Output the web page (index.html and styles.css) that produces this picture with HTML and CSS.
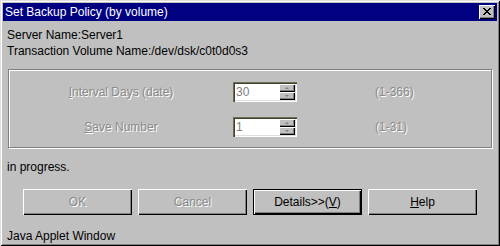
FILE: index.html
```html
<!DOCTYPE html>
<html>
<head>
<meta charset="utf-8">
<link rel="stylesheet" href="styles.css">
</head>
<body>
<div class="window">
  <div class="titlebar">
    <span class="title">Set Backup Policy (by volume)</span>
    <div class="close">
      <svg width="8" height="7" viewBox="0 0 8 7"><path d="M0 0h2v1h1v1h2v-1h1v-1h2v1h-1v1h-1v1h-1v1h1v1h1v1h1v1h-2v-1h-1v-1h-2v1h-1v1h-2v-1h1v-1h1v-1h1v-1h-1v-1h-1v-1h-1z" fill="#000"/></svg>
    </div>
  </div>
  <div class="body">
    <div class="info">Server Name:Server1</div>
    <div class="info">Transaction Volume Name:/dev/dsk/c0t0d0s3</div>
    <div class="group">
      <div class="row">
        <div class="label disabled"><u>I</u>nterval Days (date)</div>
        <div class="spin">
          <div class="field">30</div>
          <div class="spinbtns">
            <div class="sbtn"><span class="tri up"></span></div>
            <div class="sbtn"><span class="tri down"></span></div>
          </div>
        </div>
        <div class="range disabled">(1-366)</div>
      </div>
      <div class="row">
        <div class="label disabled"><u>S</u>ave Number</div>
        <div class="spin">
          <div class="field">1</div>
          <div class="spinbtns">
            <div class="sbtn"><span class="tri up"></span></div>
            <div class="sbtn"><span class="tri down"></span></div>
          </div>
        </div>
        <div class="range disabled">(1-31)</div>
      </div>
    </div>
    <div class="status">in progress.</div>
    <div class="buttons">
      <div class="btn"><span class="disabled">OK</span></div>
      <div class="btn"><span class="disabled">Cancel</span></div>
      <div class="btn default"><span>Details&gt;&gt;(<u>V</u>)</span></div>
      <div class="btn"><span><u>H</u>elp</span></div>
    </div>
    <div class="footer">Java Applet Window</div>
  </div>
</div>
</body>
</html>
```

FILE: styles.css
```css
html, body {
  margin: 0;
  padding: 0;
  background: #c0c0c0;
}
body {
  font-family: "Liberation Sans", Arial, sans-serif;
  font-size: 12px;
  color: #000;
}
.window {
  width: 500px;
  height: 246px;
  box-sizing: border-box;
  padding: 3px;
  background: #c0c0c0;
  box-shadow: inset 1px 1px #dfdfdf, inset -1px -1px #000, inset 2px 2px #fff, inset -2px -2px #808080;
  display: flex;
  flex-direction: column;
}
.titlebar {
  height: 18px;
  background: #000080;
  display: flex;
  align-items: center;
  justify-content: space-between;
  flex: none;
}
.title {
  color: #fff;
  padding-left: 2px;
  line-height: 18px;
}
.close {
  width: 16px;
  height: 14px;
  box-sizing: border-box;
  margin-right: 2px;
  background: #c0c0c0;
  box-shadow: inset 1px 1px #fff, inset -1px -1px #000, inset -2px -2px #808080;
  display: flex;
  align-items: center;
  justify-content: center;
  padding: 0 1px 1px 0;
}
.close svg { display: block; }
.body {
  display: flex;
  flex-direction: column;
  padding-top: 6px;
}
.info {
  line-height: 16px;
  padding-left: 4px;
}
.group {
  margin: 10px 5px 0 5px;
  height: 79px;
  box-sizing: border-box;
  border: 1px solid #808080;
  box-shadow: inset 1px 1px #fff, 1px 1px #fff;
  padding: 12px 0 10px 0;
  display: flex;
  flex-direction: column;
  gap: 15px;
}
.row {
  display: grid;
  grid-template-columns: 224px 64px 1fr;
  align-items: center;
  height: 20px;
}
.label {
  text-align: center;
  line-height: 16px;
}
.disabled {
  color: #8a8a8a;
  text-shadow: 1px 1px 0 #fff;
}
.spin {
  height: 20px;
  box-sizing: border-box;
  padding: 2px;
  background: #fff;
  box-shadow: inset 1px 1px #6e6e50, inset 2px 2px #404030, inset -1px -1px #fff, inset -2px -2px #dfdfdf;
  display: flex;
}
.field {
  flex: 1;
  color: #808080;
  line-height: 16px;
  padding-left: 1px;
}
.spinbtns {
  width: 16px;
  display: flex;
  flex-direction: column;
}
.sbtn {
  height: 8px;
  box-sizing: border-box;
  background: #c0c0c0;
  box-shadow: inset 1px 1px #fff, inset -1px -1px #000, inset -2px -2px #808080;
  display: flex;
  align-items: center;
  justify-content: center;
}
.tri {
  width: 0;
  height: 0;
  border-left: 2px solid transparent;
  border-right: 2px solid transparent;
}
.tri.up { border-bottom: 2px solid #808080; }
.tri.down { border-top: 2px solid #808080; }
.range {
  padding-left: 78px;
  line-height: 16px;
}
.status {
  margin-top: 11px;
  line-height: 16px;
  padding-left: 4px;
}
.buttons {
  margin-top: 14px;
  display: flex;
  gap: 6px;
  padding: 0 20px;
}
.btn {
  width: 109px;
  height: 26px;
  box-sizing: border-box;
  background: #c0c0c0;
  box-shadow: inset 1px 1px #fff, inset -1px -1px #000, inset -2px -2px #808080;
  display: flex;
  align-items: center;
  justify-content: center;
  line-height: 16px;
}
.btn.default {
  box-shadow: inset 0 0 0 1px #000, inset 2px 2px #fff, inset -2px -2px #000, inset -3px -3px #808080;
}
.footer {
  margin-top: 13px;
  line-height: 16px;
  padding-left: 4px;
}
```
